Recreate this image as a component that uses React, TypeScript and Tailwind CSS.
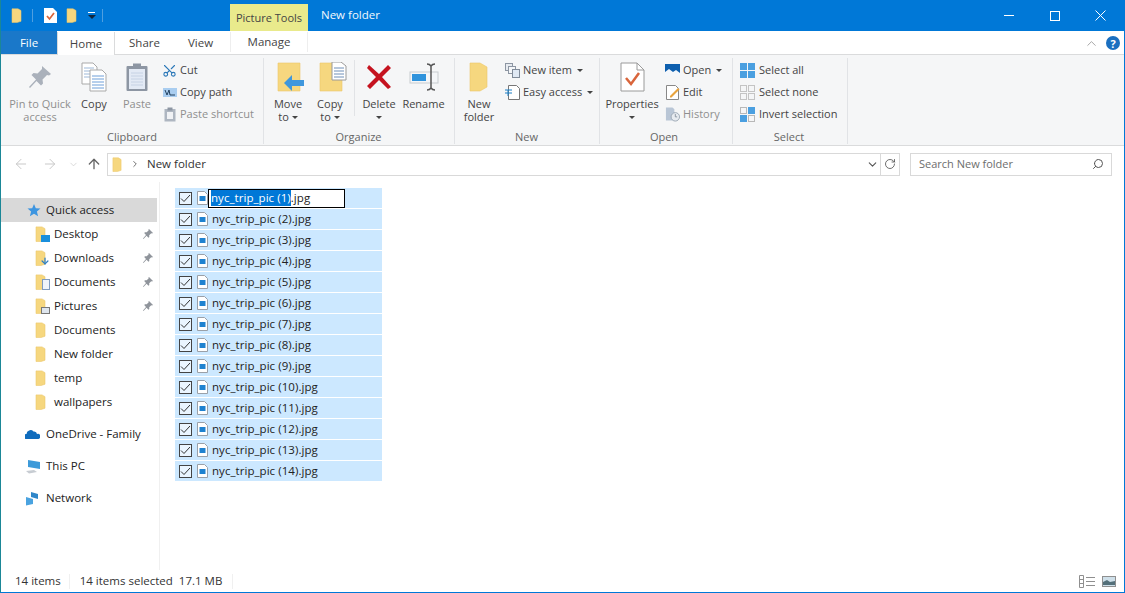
import type { ReactNode } from "react"
import { ArrowDown, ArrowLeft, ArrowRight, ArrowUp, ChevronDown, ChevronRight, ChevronUp, RotateCw, Scissors, Search } from "lucide-react"

const FOLDER = "#f6d77f"

// folder seen from the side, used all over explorer
function Folder({ w = 11, h = 18, children }: { w?: number; h?: number; children?: ReactNode }) {
  return (
    <span className="relative block shrink-0" style={{ width: w + 4, height: h }}>
      <svg width={w} height={h} viewBox="0 0 11 18" preserveAspectRatio="none">
        <path d="M1 1h6l3 2v13l-4 1.500H1z" fill={FOLDER} stroke="#ecc768" strokeWidth="0.6" />
      </svg>
      {children}
    </span>
  )
}

function Caret({ className = "" }: { className?: string }) {
  return <span className={`inline-block h-0 w-0 border-x-[3px] border-t-[3px] border-x-transparent border-t-[#444] ${className}`} />
}

function PinSmall() {
  return (
    <svg width="12" height="12" viewBox="0 0 12 12" className="shrink-0">
      <path d="M7 1l4 4-1 .6-.8-.3-2 2 .1 1.700-.8.7-2-2L1.500 11 1 10.500 4 7 2.200 5l.8-.8 1.700.1 2-2L6.400 1.600z" fill="#8f949b" />
    </svg>
  )
}

function BigPin() {
  return (
    <svg width="24" height="24" viewBox="0 0 24 24">
      <path d="M14 1l9 8-2 1.500-2-.5-4.500 4.500.5 4-2 2-4.500-4.500L2 23l-1-1 7-7.500L3.500 10l2-2 4 .5L14 4z" fill="#aab1bb" />
    </svg>
  )
}

function BigCopy() {
  return (
    <svg width="26" height="30" viewBox="0 0 26 30">
      <path d="M1 1h11l4 4v17H1z" fill="#fff" stroke="#a9a9a9" />
      <path d="M3 6h10M3 9h10M3 12h10M3 15h10" stroke="#9db8d8" />
      <path d="M9 8h12l4 4v17H9z" fill="#fff" stroke="#a9a9a9" />
      <path d="M11 14h12M11 17h12M11 20h12M11 23h12M11 26h12" stroke="#6f9fd8" />
    </svg>
  )
}

function BigPaste() {
  return (
    <svg width="24" height="30" viewBox="0 0 24 30">
      <rect x="1.500" y="4" width="21" height="25" rx="1" fill="#8d96a3" />
      <rect x="4" y="7" width="16" height="20" fill="#e3eaf5" />
      <path d="M6 11h12M6 14h12M6 17h12M6 20h12M6 23h12" stroke="#c6d2e4" />
      <rect x="8" y="1.500" width="8" height="5" fill="#8d96a3" />
    </svg>
  )
}

function MoveIcon({ copy }: { copy?: boolean }) {
  return (
    <svg width="28" height="30" viewBox="0 0 28 30" className="ml-[6px]">
      <path d="M1 1h22v28H1z" fill={FOLDER} stroke="#ecc768" strokeWidth="0.6" />
      {copy ? (
        <>
          <path d="M13 0h9l5 4v14H13z" fill="#fff" stroke="#9a9a9a" />
          <path d="M15 6h10M15 9h10M15 12h10M15 15h10" stroke="#6f8fb8" />
        </>
      ) : (
        <path d="M27 18h-12v-5l-8 8 8 8v-5h12z" fill="#3f97dd" />
      )}
    </svg>
  )
}

function BigDelete() {
  return (
    <svg width="26" height="26" viewBox="0 0 26 26">
      <path d="M3 1l10 9 9-9 3 3-9 9 9 10-3 2-9-9-9 9-3-3 9-9-9-9z" fill="#c5131f" />
    </svg>
  )
}

function BigRename() {
  return (
    <svg width="30" height="28" viewBox="0 0 30 28">
      <rect x="1" y="9" width="28" height="11" fill="#f4f6f8" stroke="#c8ccd0" />
      <rect x="3" y="11" width="14" height="7" fill="#2f93dc" />
      <path d="M18 1c2 0 3 .500 4 2 1-1.500 2-2 4-2M22 3v22M18 27c2 0 3-.500 4-2 1 1.500 2 2 4 2" fill="none" stroke="#555" strokeWidth="1.500" />
    </svg>
  )
}

function BigFolder() {
  return (
    <svg width="20" height="30" viewBox="0 0 20 30">
      <path d="M1 1h10l7 4v20l-7 4H1z" fill={FOLDER} stroke="#ecc768" strokeWidth="0.6" />
    </svg>
  )
}

function BigProps() {
  return (
    <svg width="25" height="30" viewBox="0 0 25 30">
      <path d="M1 1h16l7 7v21H1z" fill="#fff" stroke="#9a9a9a" />
      <path d="M17 1v7h7" fill="none" stroke="#9a9a9a" />
      <path d="M6 16l5 6 8-11" fill="none" stroke="#d9653b" strokeWidth="2.500" />
    </svg>
  )
}

function Grid4({ cells }: { cells: string[] }) {
  return (
    <span className="grid h-[15px] w-[15px] shrink-0 grid-cols-2 gap-px">
      {cells.map((c, i) => (
        <span key={i} className={c} />
      ))}
    </span>
  )
}

const smallIcons: Record<string, ReactNode> = {
  cut: <Scissors size={15} strokeWidth={1.700} color="#2b78b8" className="-rotate-90" />,
  path: (
    <svg width="14" height="9" viewBox="0 0 14 9">
      <rect width="14" height="9" fill="#a9cdf0" />
      <path d="M2 2l2 5 2-5 1 5h5" fill="none" stroke="#23415f" />
    </svg>
  ),
  shortcut: (
    <svg width="12" height="15" viewBox="0 0 12 15">
      <rect x="0.500" y="2" width="11" height="12.500" fill="#aeb6c1" />
      <rect x="3" y="5" width="6" height="7" fill="#f0f2f5" />
      <rect x="3.500" y="0.500" width="5" height="3" fill="#8d96a3" />
    </svg>
  ),
  newItem: (
    <svg width="15" height="15" viewBox="0 0 15 15">
      <rect x="0.500" y="0.500" width="7" height="7" fill="#e7ebf0" stroke="#8d96a3" />
      <rect x="3.500" y="3.500" width="7" height="7" fill="#f4f6f8" stroke="#8d96a3" />
      <rect x="7.500" y="6.500" width="7" height="8" fill="#dfe8f3" stroke="#7f8a98" />
    </svg>
  ),
  easy: (
    <svg width="15" height="15" viewBox="0 0 15 15">
      <path d="M3.500.5h8l3 3v11h-11z" fill="#fff" stroke="#777" />
      <path d="M0 5h7M0 8h7M3 5v6" stroke="#1d7fc4" />
    </svg>
  ),
  open: (
    <svg width="15" height="12" viewBox="0 0 15 12">
      <rect width="15" height="12" fill="#0e5fae" />
      <path d="M0 12V8l4-3 4 3 3-2 4 3v3z" fill="#f4f7fb" />
    </svg>
  ),
  edit: (
    <svg width="14" height="15" viewBox="0 0 14 15">
      <path d="M.5.5h9l3 3v11H.5z" fill="#fff" stroke="#888" />
      <path d="M4 11l8-8 1.500 1.500-8 8H4z" fill="#e8a33d" />
    </svg>
  ),
  history: (
    <svg width="16" height="15" viewBox="0 0 16 15">
      <path d="M1 0h7l2 2v12H1z" fill="#b9c6d6" />
      <circle cx="11" cy="10" r="4.500" fill="#e7ebf0" stroke="#9aa5b2" />
      <path d="M11 7v3h2" fill="none" stroke="#8a94a0" />
    </svg>
  ),
  all: <Grid4 cells={["bg-[#4a9fe0]", "bg-[#4a9fe0]", "bg-[#4a9fe0]", "bg-[#4a9fe0]"]} />,
  none: <Grid4 cells={["border border-[#c4c4c4]", "border border-[#c4c4c4]", "border border-[#c4c4c4]", "border border-[#c4c4c4]"]} />,
  invert: <Grid4 cells={["border border-[#b8b8b8]", "bg-[#4a9fe0]", "bg-[#4a9fe0]", "border border-[#b8b8b8]"]} />,
}

function BigButton({ icon, label, width, dim, caret, inlineCaret, className = "" }: { icon: ReactNode; label: string[]; width: number; dim?: boolean; caret?: boolean; inlineCaret?: boolean; className?: string }) {
  return (
    <div className={`flex shrink-0 flex-col items-center ${className}`} style={{ width }}>
      <div className="mt-[2px] flex h-[34px] items-center justify-center">{icon}</div>
      <div className={`mt-[3px] text-center leading-[13px] whitespace-nowrap ${dim ? "text-[#8f8f8f]" : "text-[#444]"}`}>
        {label.map((l, i) => (
          <div key={l}>
            {l}
            {inlineCaret && i === label.length - 1 && <Caret className="mb-[2px] ml-[3px] border-t-[#333]" />}
          </div>
        ))}
        {caret && <Caret className="mb-[2px] border-t-[#333]" />}
      </div>
    </div>
  )
}

function SmallButton({ icon, label, dim, caret, gap = 5, iconWidth = 15 }: { icon: string; label: string; dim?: boolean; caret?: boolean; gap?: number; iconWidth?: number }) {
  return (
    <div className={`flex h-[22px] items-center whitespace-nowrap ${dim ? "text-[#8f8f8f]" : "text-[#444]"}`}>
      <span className="flex shrink-0 items-center justify-center" style={{ width: iconWidth, marginRight: gap }}>
        {smallIcons[icon]}
      </span>
      {label}
      {caret && <Caret className="ml-[5px] border-t-[#333]" />}
    </div>
  )
}

function Group({ title, width, children, className = "", titleClass = "" }: { title: string; width: number; children: ReactNode; className?: string; titleClass?: string }) {
  return (
    <div className="flex h-[86px] shrink-0 flex-col border-r border-[#e1e3e6]" style={{ width }}>
      <div className={`flex h-[72px] items-start ${className}`}>{children}</div>
      <div className={`text-center leading-[15px] text-[#666] ${titleClass}`}>{title}</div>
    </div>
  )
}

function Ribbon() {
  return (
    <div className="flex h-[91px] shrink-0 items-start border-b border-[#dadbdc] bg-[#f5f6f7] pt-[3px] text-[11px]">
      <Group title="Clipboard" width={263} className="pl-[4px]">
        <BigButton icon={<BigPin />} label={["Pin to Quick", "access"]} width={70} dim />
        <BigButton icon={<BigCopy />} label={["Copy"]} width={38} />
        <BigButton icon={<BigPaste />} label={["Paste"]} width={42} dim className="ml-[3px]" />
        <div className="mt-px ml-[4px] flex flex-col">
          <SmallButton icon="cut" label="Cut" gap={3} />
          <SmallButton icon="path" label="Copy path" gap={3} />
          <SmallButton icon="shortcut" label="Paste shortcut" dim gap={3} />
        </div>
      </Group>
      <Group title="Organize" width={191} className="pl-[3px]" titleClass="pr-px">
        <BigButton icon={<MoveIcon />} label={["Move", "to"]} width={42} inlineCaret />
        <BigButton icon={<MoveIcon copy />} label={["Copy", "to"]} width={42} inlineCaret />
        <span className="mx-[3px] mt-[2px] h-[56px] w-px bg-[#e1e3e6]" />
        <BigButton icon={<BigDelete />} label={["Delete"]} width={42} caret />
        <BigButton icon={<BigRename />} label={["Rename"]} width={47} />
      </Group>
      <Group title="New" width={145} className="pl-[3px]" titleClass="pr-px">
        <BigButton icon={<BigFolder />} label={["New", "folder"]} width={42} />
        <div className="mt-px ml-[5px] flex flex-col">
          <SmallButton icon="newItem" label="New item" caret gap={3} />
          <SmallButton icon="easy" label="Easy access" caret gap={3} />
        </div>
      </Group>
      <Group title="Open" width={133} className="pl-[3px]" titleClass="pr-[4px]">
        <BigButton icon={<BigProps />} label={["Properties"]} width={58} caret />
        <div className="mt-px ml-[4px] flex flex-col">
          <SmallButton icon="open" label="Open" caret gap={3} />
          <SmallButton icon="edit" label="Edit" gap={3} />
          <SmallButton icon="history" label="History" dim gap={3} />
        </div>
      </Group>
      <Group title="Select" width={115} className="pl-[7px]" titleClass="pr-[2px]">
        <div className="mt-px flex flex-col">
          <SmallButton icon="all" label="Select all" gap={4} />
          <SmallButton icon="none" label="Select none" gap={4} />
          <SmallButton icon="invert" label="Invert selection" gap={4} />
        </div>
      </Group>
    </div>
  )
}

function TitleBar() {
  return (
    <div className="flex h-[31px] shrink-0 items-center bg-[#0078d7] pl-[10px] text-white">
      <Folder w={11} h={15} />
      <span className="ml-[6px] h-[13px] w-px bg-[#4f9fe0]" />
      <svg width="13" height="15" viewBox="0 0 13 15" className="ml-[11px]">
        <path d="M0 0h9l4 4v11H0z" fill="#fff" />
        <path d="M3 8l2.500 3L10 5" fill="none" stroke="#d9653b" strokeWidth="1.700" />
      </svg>
      <span className="ml-[9px]">
        <Folder w={11} h={15} />
      </span>
      <span className="ml-[6px] flex w-[9px] flex-col items-center gap-[2px]">
        <span className="h-px w-[7px] bg-white" />
        <span className="h-0 w-0 border-x-[4px] border-t-[4px] border-x-transparent border-t-[#10243c]" />
      </span>
      <span className="ml-[6px] h-[13px] w-px bg-[#4f9fe0]" />
      <div className="ml-[127px] mt-[4px] flex h-[27px] w-[78px] items-center justify-center bg-[#e9ea8c] text-[11px] text-[#444]">Picture Tools</div>
      <span className="ml-[13px] -mt-px text-[#f2f8fd]">New folder</span>
      <div className="ml-auto flex items-center">
        <div className="flex w-[46px] justify-center">
          <span className="h-px w-[10px] bg-white" />
        </div>
        <div className="flex w-[46px] justify-center">
          <span className="h-[10px] w-[10px] border border-white" />
        </div>
        <div className="flex w-[46px] justify-center pr-px">
          <svg width="11" height="11" viewBox="0 0 11 11">
            <path d="M.5.5l10 10M10.500.5l-10 10" stroke="#fff" />
          </svg>
        </div>
      </div>
    </div>
  )
}

function TabStrip() {
  return (
    <div className="relative flex h-[24px] shrink-0 items-stretch border-b border-[#dadbdc] bg-white pt-px text-[#444]">
      <div className="-mt-px flex w-[56px] items-center justify-center bg-[#1a78c9] pt-px text-white">File</div>
      <div className="z-10 -mb-px flex w-[58px] items-center justify-center border-x border-[#dadbdc] bg-[#fff]">Home</div>
      <div className="flex w-[59px] items-center justify-center">Share</div>
      <div className="flex w-[56px] items-center justify-center pr-[3px]">View</div>
      <div className="mb-[2px] flex w-[78px] items-center justify-center border-x border-[#eeeeee]">Manage</div>
      <div className="ml-auto flex items-center pr-[4px]">
        <ChevronUp size={15} strokeWidth={1.200} color="#8a8a8a" className="mr-[7px]" />
        <span className="flex h-[14px] w-[14px] items-center justify-center rounded-full bg-[#1a6fc0] text-[11px] leading-none font-bold text-white">?</span>
      </div>
    </div>
  )
}

function AddressBar() {
  return (
    <div className="flex h-[36px] shrink-0 items-center pl-[12px]">
      <ArrowLeft size={16} strokeWidth={1.500} color="#c9c9c9" />
      <ArrowRight size={16} strokeWidth={1.500} color="#c9c9c9" className="ml-[13px]" />
      <ChevronDown size={11} strokeWidth={1.500} color="#c9c9c9" className="ml-[10px]" />
      <ArrowUp size={16} strokeWidth={2} color="#666" className="ml-[7px]" />
      <div className="ml-[5px] flex h-[23px] w-[793px] items-center border border-[#d9d9d9] pl-[4px] text-[#333]">
        <Folder w={10} h={15} />
        <ChevronRight size={10} strokeWidth={2} color="#555" className="ml-[4px]" />
        <span className="ml-[7px]">New folder</span>
        <ChevronDown size={13} strokeWidth={2} color="#555" className="ml-auto mr-[1px]" />
        <div className="flex h-full w-[19px] items-center justify-center border-l border-[#d9d9d9]">
          <RotateCw size={12} strokeWidth={1.700} color="#555" />
        </div>
      </div>
      <div className="ml-[10px] flex h-[23px] w-[202px] items-center border border-[#d9d9d9] pr-[7px] pl-[8px] text-[11px] text-[#6d6d6d]">
        Search New folder
        <Search size={12} strokeWidth={2} color="#555" className="ml-auto -scale-x-100" />
      </div>
    </div>
  )
}

function NavItem({ icon, label, pinned, active, indent = 34, gap = 4 }: { icon: ReactNode; label: string; pinned?: boolean; active?: boolean; indent?: number; gap?: number }) {
  return (
    <div className={`flex h-[24px] items-center pr-[3px] text-[#222] ${active ? "bg-[#d9d9d9]" : ""}`} style={{ paddingLeft: indent }}>
      <span style={{ marginRight: gap }}>{icon}</span>
      {label}
      {pinned && (
        <span className="ml-auto">
          <PinSmall />
        </span>
      )}
    </div>
  )
}

function Overlay({ children }: { children: ReactNode }) {
  return <span className="absolute right-0 bottom-0">{children}</span>
}

function NavPane() {
  return (
    <div className="flex w-[159px] shrink-0 flex-col border-r border-[#f0f0f0] pt-[16px] pr-[2px]">
      <NavItem
        active
        indent={25}
        gap={5}
        label="Quick access"
        icon={
          <svg width="15" height="15" viewBox="0 0 15 15" className="block">
            <path d="M8 1l1.800 4.300 4.700.3-3.600 3 1.200 4.600L8 10.700l-4.100 2.500 1.200-4.600-3.600-3 4.700-.3z" fill="#3d95e0" />
          </svg>
        }
      />
      <NavItem
        label="Desktop"
        pinned
        icon={
          <Folder w={11} h={16}>
            <Overlay>
              <span className="block h-[7px] w-[9px] bg-[#1a8fdc]" />
            </Overlay>
          </Folder>
        }
      />
      <NavItem
        label="Downloads"
        pinned
        icon={
          <Folder w={11} h={16}>
            <Overlay>
              <ArrowDown size={10} strokeWidth={3} color="#2f7fc4" />
            </Overlay>
          </Folder>
        }
      />
      <NavItem
        label="Documents"
        pinned
        icon={
          <Folder w={11} h={16}>
            <Overlay>
              <span className="block h-[11px] w-[8px] border border-[#7f9cc0] bg-[#eef4fb]" />
            </Overlay>
          </Folder>
        }
      />
      <NavItem
        label="Pictures"
        pinned
        icon={
          <Folder w={11} h={16}>
            <Overlay>
              <span className="block h-[7px] w-[9px] border border-[#777] bg-[#dfe6ee]" />
            </Overlay>
          </Folder>
        }
      />
      <NavItem label="Documents" icon={<Folder w={11} h={16} />} />
      <NavItem label="New folder" icon={<Folder w={11} h={16} />} />
      <NavItem label="temp" icon={<Folder w={11} h={16} />} />
      <NavItem label="wallpapers" icon={<Folder w={11} h={16} />} />
      <div className="h-[8px]" />
      <NavItem
        indent={24}
        gap={6}
        label="OneDrive - Family"
        icon={
          <svg width="15" height="10" viewBox="0 0 15 10" className="block">
            <path d="M1 10a2.500 2.500 0 0 1 .5-5 4 4 0 0 1 7-2.500A3 3 0 0 1 12 5a2.500 2.500 0 0 1 1.500 5z" fill="#0f6cbd" />
          </svg>
        }
      />
      <div className="h-[8px]" />
      <NavItem
        indent={24}
        gap={6}
        label="This PC"
        icon={
          <svg width="15" height="15" viewBox="0 0 15 15" className="block">
            <path d="M3 1l12 2v7L3 8z" fill="#3d9ad9" />
            <path d="M1 12l8-1 3 2-8 1.500z" fill="#c7ccd2" />
          </svg>
        }
      />
      <div className="h-[8px]" />
      <NavItem
        indent={24}
        gap={6}
        label="Network"
        icon={
          <svg width="15" height="15" viewBox="0 0 15 15" className="block">
            <path d="M6 1l7 2v5l-7-2z" fill="#2f86c9" />
            <path d="M1 6l7 2v5l-7 1.500z" fill="#4aa3e0" />
          </svg>
        }
      />
    </div>
  )
}

function FileIcon() {
  return (
    <svg width="11" height="14" viewBox="0 0 11 14" className="block shrink-0">
      <path d="M.5.5h7l3 3v10H.5z" fill="#fff" stroke="#9aa0a8" />
      <rect x="2.500" y="5" width="6" height="5" fill="#1f82d0" />
    </svg>
  )
}

function FileRow({ n, renaming }: { n: number; renaming?: boolean }) {
  return (
    <div className="flex h-[20px] items-center bg-[#cce8ff] pl-[4px] text-[#222]">
      <span className="flex h-[13px] w-[13px] shrink-0 items-center justify-center border border-[#444] bg-[#eaf5ff]">
        <svg width="11" height="9" viewBox="0 0 11 9">
          <path d="M1 4.500l3 3 6-6.500" fill="none" stroke="#333" />
        </svg>
      </span>
      <span className="ml-[5px]">
        <FileIcon />
      </span>
      {renaming ? (
        <div className="flex h-[19px] w-[137px] items-center border border-black bg-white pl-[2px] tracking-[0.05px]">
          <span className="bg-[#0078d7] text-white">nyc_trip_pic ({n})</span>.jpg
        </div>
      ) : (
        <span className="ml-[4px] tracking-[0.05px]">nyc_trip_pic ({n}).jpg</span>
      )}
    </div>
  )
}

function StatusBar() {
  return (
    <div className="flex h-[22px] shrink-0 items-center pl-[14px] text-[#333]">
      <span>14 items</span>
      <span className="ml-[8px] h-[15px] w-px bg-[#f0f0f0]" />
      <span className="ml-[10px]">14 items selected</span>
      <span className="ml-[6px]">17.1 MB</span>
      <span className="ml-[10px] h-[15px] w-px bg-[#f0f0f0]" />
      <div className="ml-auto flex items-center gap-[7px] pr-[8px]">
        <svg width="16" height="13" viewBox="0 0 16 13">
          <path d="M.5.5h4v12h-4zM.5 4.500h4M.5 8.500h4M7 2.500h9M7 6.500h9M7 10.500h9" fill="none" stroke="#8f8f8f" />
        </svg>
        <svg width="14" height="11" viewBox="0 0 14 11">
          <rect x="0.500" y="0.500" width="13" height="10" fill="#cfe0ea" stroke="#8f8f8f" />
          <path d="M1 9V6l4-2 3 2 5-1v4z" fill="#54707a" />
        </svg>
      </div>
    </div>
  )
}

const files = Array.from({ length: 14 }, (_, i) => i + 1)

export default function App() {
  return (
    <div
      className="flex h-[593px] w-[1125px] flex-col overflow-hidden border-r border-b border-l border-r-[#0078d7] border-b-[#0078d7] border-l-[#1b8797] bg-white text-[11.5px] leading-[16px]"
      style={{ fontFamily: '"Open Sans", "Noto Sans", sans-serif' }}
    >
      <TitleBar />
      <TabStrip />
      <Ribbon />
      <AddressBar />
      <div className="flex min-h-0 flex-1">
        <NavPane />
        <div className="flex-1 pt-[6px] pl-[15px]">
          <div className="flex w-[207px] flex-col gap-px">
            {files.map((n) => (
              <FileRow key={n} n={n} renaming={n === 1} />
            ))}
          </div>
        </div>
      </div>
      <StatusBar />
    </div>
  )
}
